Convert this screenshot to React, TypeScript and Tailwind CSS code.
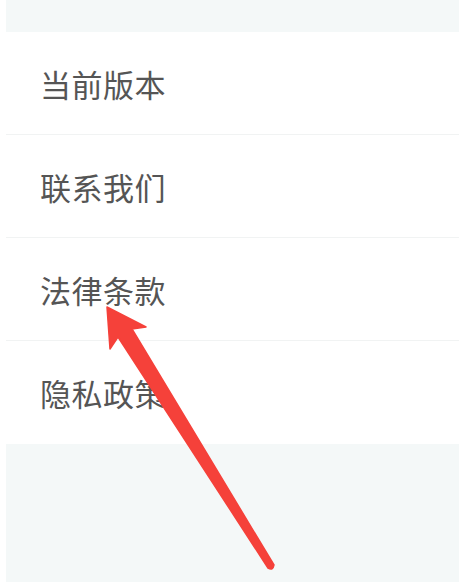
const items = ["当前版本", "联系我们", "法律条款", "隐私政策"];

const Arrow = () => (
  <svg
    className="pointer-events-none absolute inset-0"
    width="459"
    height="582"
    viewBox="0 0 459 582"
    aria-hidden="true"
  >
    <path
      d="M107 307 L146 327 L132 329 L274 565 Q273 571 268 568 L118 337 L110 349 Z"
      fill="#f5413a"
      stroke="#f5413a"
      strokeWidth="1.5"
      strokeLinejoin="round"
    />
  </svg>
);

const App = () => {
  return (
    <div className="relative h-[582px] w-[459px] overflow-hidden bg-white pl-[6px] font-['Noto_Sans_CJK_SC','Noto_Sans',sans-serif]">
      <div className="flex h-full flex-col">
        <div className="h-[32px] bg-[#f4f8f8]" />
        <ul className="bg-white">
          {items.map((label, i) => (
            <li
              key={label}
              className={
                i < items.length - 1
                  ? "flex h-[103px] items-center border-b border-[#f1f3f3] pl-[34px]"
                  : "flex h-[103px] items-center pl-[34px]"
              }
            >
              <span className="text-[31px] font-normal leading-none tracking-[0.5px] text-[#555555]">
                {label}
              </span>
            </li>
          ))}
        </ul>
        <div className="flex-1 bg-[#f4f8f8]" />
      </div>
      <Arrow />
    </div>
  );
};

export default App;
